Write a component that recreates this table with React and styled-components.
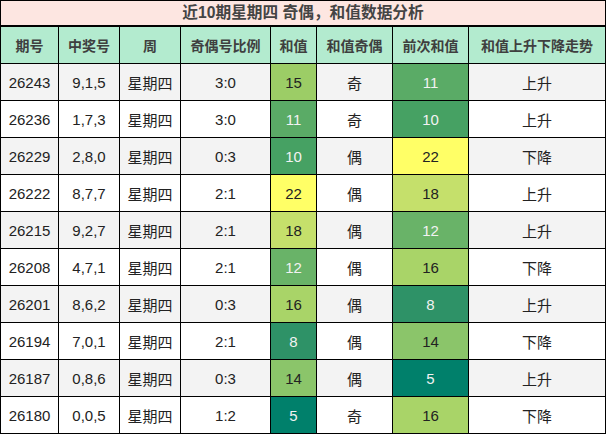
import React from 'react';
import styled, { createGlobalStyle } from 'styled-components';

const GlobalStyle = createGlobalStyle`
  body {
    margin: 0;
    background: #fff;
    font-family: "Liberation Sans", "Noto Sans CJK SC", sans-serif;
  }
`;

const Table = styled.table`
  border-collapse: collapse;
  table-layout: fixed;
  width: 605px;
  color: #222;
`;

const TitleCell = styled.th`
  height: 24px;
  padding: 0;
  background: #fde6e1;
  border: 1px solid #000;
  border-bottom-width: 2px;
  color: #444;
  font-size: 15.7px;
  font-weight: 700;
  line-height: 20px;
  text-align: center;
`;

const HeadCell = styled.th`
  height: 36px;
  padding: 0;
  background: #b3ebcf;
  border: 1px solid #000;
  color: #3f3f3f;
  font-size: 14px;
  font-weight: 700;
  text-align: center;
`;

const Row = styled.tr`
  background: ${(p) => (p.$odd ? '#f3f3f3' : '#fff')};
`;

const Cell = styled.td`
  height: 36px;
  padding: 0;
  border: 1px solid #000;
  font-size: 15px;
  text-align: center;
  background: ${(p) => p.$bg || 'transparent'};
  color: ${(p) => (p.$light ? '#f2f2f2' : '#222')};
`;

const scale = {
  5: ['#00806b', true],
  8: ['#2e9267', true],
  10: ['#46a163', true],
  11: ['#5aab66', true],
  12: ['#69b368', true],
  14: ['#8bc56a', false],
  15: ['#9ccd66', false],
  16: ['#a9d468', false],
  18: ['#c5e06b', false],
  22: ['#ffff66', false],
};

const widths = [58, 61, 61, 90, 46, 76, 76, 137];
const heads = ['期号', '中奖号', '周', '奇偶号比例', '和值', '和值奇偶', '前次和值', '和值上升下降走势'];

const rows = [
  ['26243', '9,1,5', '3:0', 15, '奇', 11, '上升'],
  ['26236', '1,7,3', '3:0', 11, '奇', 10, '上升'],
  ['26229', '2,8,0', '0:3', 10, '偶', 22, '下降'],
  ['26222', '8,7,7', '2:1', 22, '偶', 18, '上升'],
  ['26215', '9,2,7', '2:1', 18, '偶', 12, '上升'],
  ['26208', '4,7,1', '2:1', 12, '偶', 16, '下降'],
  ['26201', '8,6,2', '0:3', 16, '偶', 8, '上升'],
  ['26194', '7,0,1', '2:1', 8, '偶', 14, '下降'],
  ['26187', '0,8,6', '0:3', 14, '偶', 5, '上升'],
  ['26180', '0,0,5', '1:2', 5, '奇', 16, '下降'],
];

const SumCell = ({ value }) => {
  const [bg, light] = scale[value];
  return (
    <Cell $bg={bg} $light={light}>
      {value}
    </Cell>
  );
};

export default function App() {
  return (
    <>
      <GlobalStyle />
      <Table>
        <colgroup>
          {widths.map((w, i) => (
            <col key={i} style={{ width: w }} />
          ))}
        </colgroup>
        <thead>
          <tr>
            <TitleCell colSpan={8}>近10期星期四 奇偶，和值数据分析</TitleCell>
          </tr>
          <tr>
            {heads.map((h) => (
              <HeadCell key={h}>{h}</HeadCell>
            ))}
          </tr>
        </thead>
        <tbody>
          {rows.map((r, i) => (
            <Row key={r[0]} $odd={i % 2 === 0}>
              <Cell>{r[0]}</Cell>
              <Cell>{r[1]}</Cell>
              <Cell>星期四</Cell>
              <Cell>{r[2]}</Cell>
              <SumCell value={r[3]} />
              <Cell>{r[4]}</Cell>
              <SumCell value={r[5]} />
              <Cell>{r[6]}</Cell>
            </Row>
          ))}
        </tbody>
      </Table>
    </>
  );
}
